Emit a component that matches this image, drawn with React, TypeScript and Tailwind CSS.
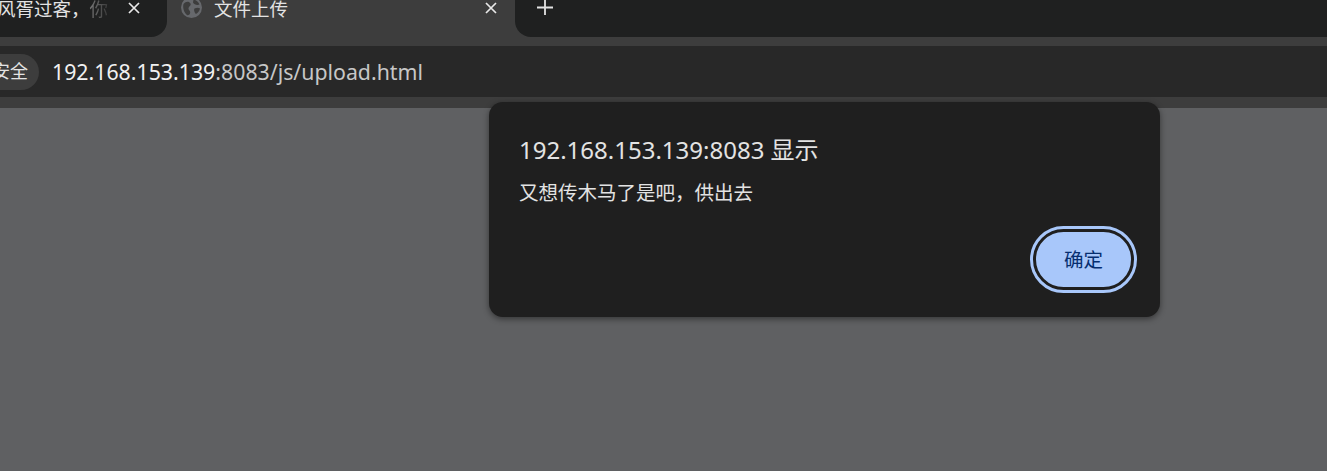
const FONT = "font-['Noto_Sans','Noto_Sans_CJK_SC',sans-serif]"

function CloseIcon() {
  return (
    <svg width="12" height="12" viewBox="0 0 12 12" fill="none" stroke="#e8e8e8" strokeWidth="1.7">
      <path d="M1 1 L11 11 M11 1 L1 11" />
    </svg>
  )
}

function GlobeIcon() {
  return (
    <svg width="21" height="21" viewBox="0 0 21 21" className="shrink-0 -mt-[3px]">
      <circle cx="10.5" cy="10.5" r="10.5" fill="#66686c" />
      <path d="M2.5 7 C5 4 8 4 9.5 6.5 C10.5 8.5 7.5 9.5 7.5 11.5 C7.5 13.5 10 14 9 16.5 C8.5 18 7 18.5 6 18 C3 15.5 1.5 11 2.5 7 Z" fill="#3d3d3d" />
      <path d="M12.5 2.5 C15 3 17.5 5 18.5 7.5 C16 8.5 13 7.5 12 5.5 Z M13.5 11.5 C15.5 10.5 18 10.5 19 11.5 C18.5 14 17 16 15 17 C13.5 15.5 12.5 13 13.5 11.5 Z" fill="#3d3d3d" />
    </svg>
  )
}

function Dialog() {
  return (
    <div className="absolute left-[489px] top-[102px] w-[671px] h-[215px] rounded-[14px] bg-[#1f1f1f] shadow-[0_2px_6px_rgba(0,0,0,0.45)] pl-[30px] pr-[26px] pt-[32px] flex flex-col">
      <div className="text-[24px] leading-[32px] text-[#e3e3e3]">192.168.153.139:8083 显示</div>
      <div className="mt-[14px] text-[19.5px] leading-[26px] text-[#e3e3e3]">又想传木马了是吧，供出去</div>
      <div className="mt-auto mb-[27px] flex justify-end">
        <button className="w-[101px] h-[61px] rounded-full bg-[#a8c7fa] text-[#062e6f] text-[19.5px] border-[3px] border-[#1f1f1f] outline-[3px] outline-[#a8c7fa]">
          确定
        </button>
      </div>
    </div>
  )
}

export default function App() {
  return (
    <div className={`relative w-[1327px] h-[471px] overflow-hidden flex flex-col bg-[#5f6062] ${FONT}`}>
      {/* Tab strip */}
      <div className="h-[46px] shrink-0 flex bg-[#3d3d3d]">
        <div className="w-[167px] h-[37px] bg-[#1f2020] rounded-br-[16px] flex justify-end items-start pr-[27px] overflow-hidden">
          <span className="text-[18.5px] leading-[18px] text-[#e3e3e3] whitespace-nowrap mr-[20px]">
            来风胥过客，<span className="bg-gradient-to-r from-[#7a7a7a] to-[#3a3a3a] bg-clip-text text-transparent">你</span>
          </span>
          <span className="h-[15px] flex items-center"><CloseIcon /></span>
        </div>
        <div className="w-[348px] h-[37px] flex items-start pl-[14px] pr-[18px] overflow-hidden">
          <GlobeIcon />
          <span className="ml-[12px] text-[18.5px] leading-[18px] text-[#e3e3e3] whitespace-nowrap">文件上传</span>
          <span className="ml-auto h-[15px] flex items-center"><CloseIcon /></span>
        </div>
        <div className="flex-1 h-[37px] bg-[#1f2020] rounded-bl-[16px] flex items-start pl-[22px]">
          <svg width="16" height="16" viewBox="0 0 16 16" fill="none" stroke="#e3e3e3" strokeWidth="1.8">
            <path d="M8 0 V15 M0 7.5 H16" />
          </svg>
        </div>
      </div>
      {/* Address bar */}
      <div className="h-[51px] shrink-0 bg-[#282828] flex items-center">
        <div className="h-[36px] pl-[10px] pr-[11px] -ml-[18px] rounded-r-full bg-[#3d3d3d] flex items-center text-[18px] text-[#e3e3e3]">安全</div>
        <div className="ml-[13px] text-[21.3px] text-[#c7c7c7] whitespace-nowrap">
          <span className="text-[#f1f1f1]">192.168.153.139</span>:8083/js/upload.html
        </div>
      </div>
      <div className="h-[11px] shrink-0 bg-[#3d3d3d]" />
      <div className="flex-1" />
      <Dialog />
    </div>
  )
}
